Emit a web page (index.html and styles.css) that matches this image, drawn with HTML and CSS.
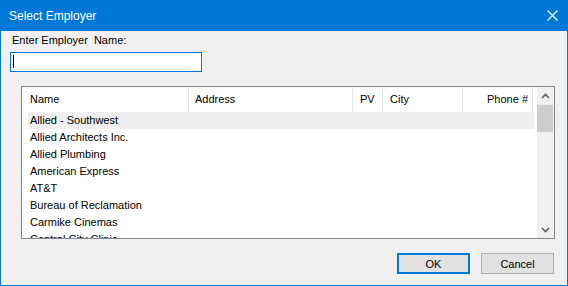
FILE: index.html
```html
<!DOCTYPE html>
<html lang="en">
<head>
  <meta charset="UTF-8" />
  <title>Select Employer</title>
  <link rel="stylesheet" href="styles.css">
</head>
<body>
  <div class="window">
    <div class="titlebar">
      <span class="title">Select Employer</span>
      <svg class="close" width="11" height="11" viewBox="0 0 11 11">
        <path d="M0.5 0.5 L10.5 10.5 M10.5 0.5 L0.5 10.5" stroke="#fff" stroke-width="1.1" fill="none" />
      </svg>
    </div>
    <div class="content">
      <label class="prompt" for="empName">Enter Employer&nbsp; Name:</label>
      <div class="name-input" id="empName"><span class="caret"></span></div>

      <div class="listbox">
        <div class="list-main">
          <div class="list-head">
            <div class="col c-name">Name</div>
            <div class="col c-addr">Address</div>
            <div class="col c-pv">PV</div>
            <div class="col c-city">City</div>
            <div class="col c-phone">Phone #</div>
          </div>
          <ul class="rows">
            <li class="selected">Allied - Southwest</li>
            <li>Allied Architects Inc.</li>
            <li>Allied Plumbing</li>
            <li>American Express</li>
            <li>AT&amp;T</li>
            <li>Bureau of Reclamation</li>
            <li>Carmike Cinemas</li>
            <li>Central City Clinic</li>
          </ul>
        </div>
        <div class="scrollbar">
          <div class="arrow">
            <svg width="9" height="6" viewBox="0 0 9 6"><path d="M1 5 L4.5 1.5 L8 5" stroke="#606060" stroke-width="1.6" fill="none" /></svg>
          </div>
          <div class="thumb"></div>
          <div class="track"></div>
          <div class="arrow">
            <svg width="9" height="6" viewBox="0 0 9 6"><path d="M1 1 L4.5 4.5 L8 1" stroke="#606060" stroke-width="1.6" fill="none" /></svg>
          </div>
        </div>
      </div>

      <div class="buttons">
        <button class="btn default">OK</button>
        <button class="btn">Cancel</button>
      </div>
    </div>
  </div>
</body>
</html>
```

FILE: styles.css
```css
* {
  box-sizing: border-box;
}
body {
  margin: 0;
  font-family: "Liberation Sans", Arial, sans-serif;
  font-size: 11px;
  color: #000;
}
.window {
  width: 568px;
  height: 286px;
  border: 1px solid #0078d7;
  background: #f0f0f0;
  display: flex;
  flex-direction: column;
}
.titlebar {
  height: 30px;
  background: #0078d7;
  display: flex;
  align-items: center;
  justify-content: space-between;
  padding: 0 9px 0 8px;
  flex-shrink: 0;
}
.title {
  color: #fff;
  font-size: 12px;
  padding-bottom: 1px;
}
.close {
  display: block;
  margin-bottom: 1px;
}
.content {
  flex: 1;
  display: flex;
  flex-direction: column;
  padding: 0 13px 0 0;
}
.prompt {
  display: block;
  margin: 3px 0 0 11px;
  line-height: 13px;
  height: 13px;
}
.name-input {
  margin: 5px 0 0 9px;
  width: 192px;
  height: 20px;
  border: 1px solid #0078d7;
  background: #fff;
  padding: 2px 0 0 2px;
}
.caret {
  display: block;
  width: 1px;
  height: 13px;
  background: #000;
}
.listbox {
  margin: 14px 0 0 20px;
  width: 534px;
  height: 153px;
  border: 1px solid #828790;
  background: #fff;
  display: flex;
  overflow: hidden;
}
.list-main {
  flex: 1;
  overflow: hidden;
}
.list-head {
  display: flex;
  height: 25px;
  padding-top: 1px;
}
.col {
  height: 23px;
  line-height: 23px;
  padding-left: 7px;
  border-right: 1px solid #e5e5e5;
  white-space: nowrap;
}
.c-name { width: 167px; padding-left: 8px; }
.c-addr { width: 164px; padding-left: 6px; }
.c-pv { width: 30px; }
.c-city { width: 80px; }
.c-phone { width: 70px; text-align: right; padding-right: 4px; }
.rows {
  list-style: none;
  margin: 0;
  padding: 0 0 0 6px;
}
.rows li {
  height: 17px;
  line-height: 17px;
  padding-left: 2px;
  width: 506px;
  white-space: nowrap;
}
.rows li.selected {
  background: #efefef;
}
.scrollbar {
  width: 17px;
  background: #f0f0f0;
  display: flex;
  flex-direction: column;
}
.arrow {
  height: 17px;
  display: flex;
  align-items: center;
  justify-content: center;
}
.thumb {
  height: 27px;
  margin: 1px 1px 0 0;
  background: #cdcdcd;
}
.track {
  flex: 1;
}
.buttons {
  margin-top: 14px;
  display: flex;
  justify-content: flex-end;
  gap: 11px;
}
.btn {
  width: 73px;
  height: 21px;
  padding: 0;
  font-family: "Liberation Sans", Arial, sans-serif;
  font-size: 11px;
  background: #e1e1e1;
  border: 1px solid #adadad;
  color: #000;
}
.btn.default {
  border: 2px solid #0078d7;
}
```
